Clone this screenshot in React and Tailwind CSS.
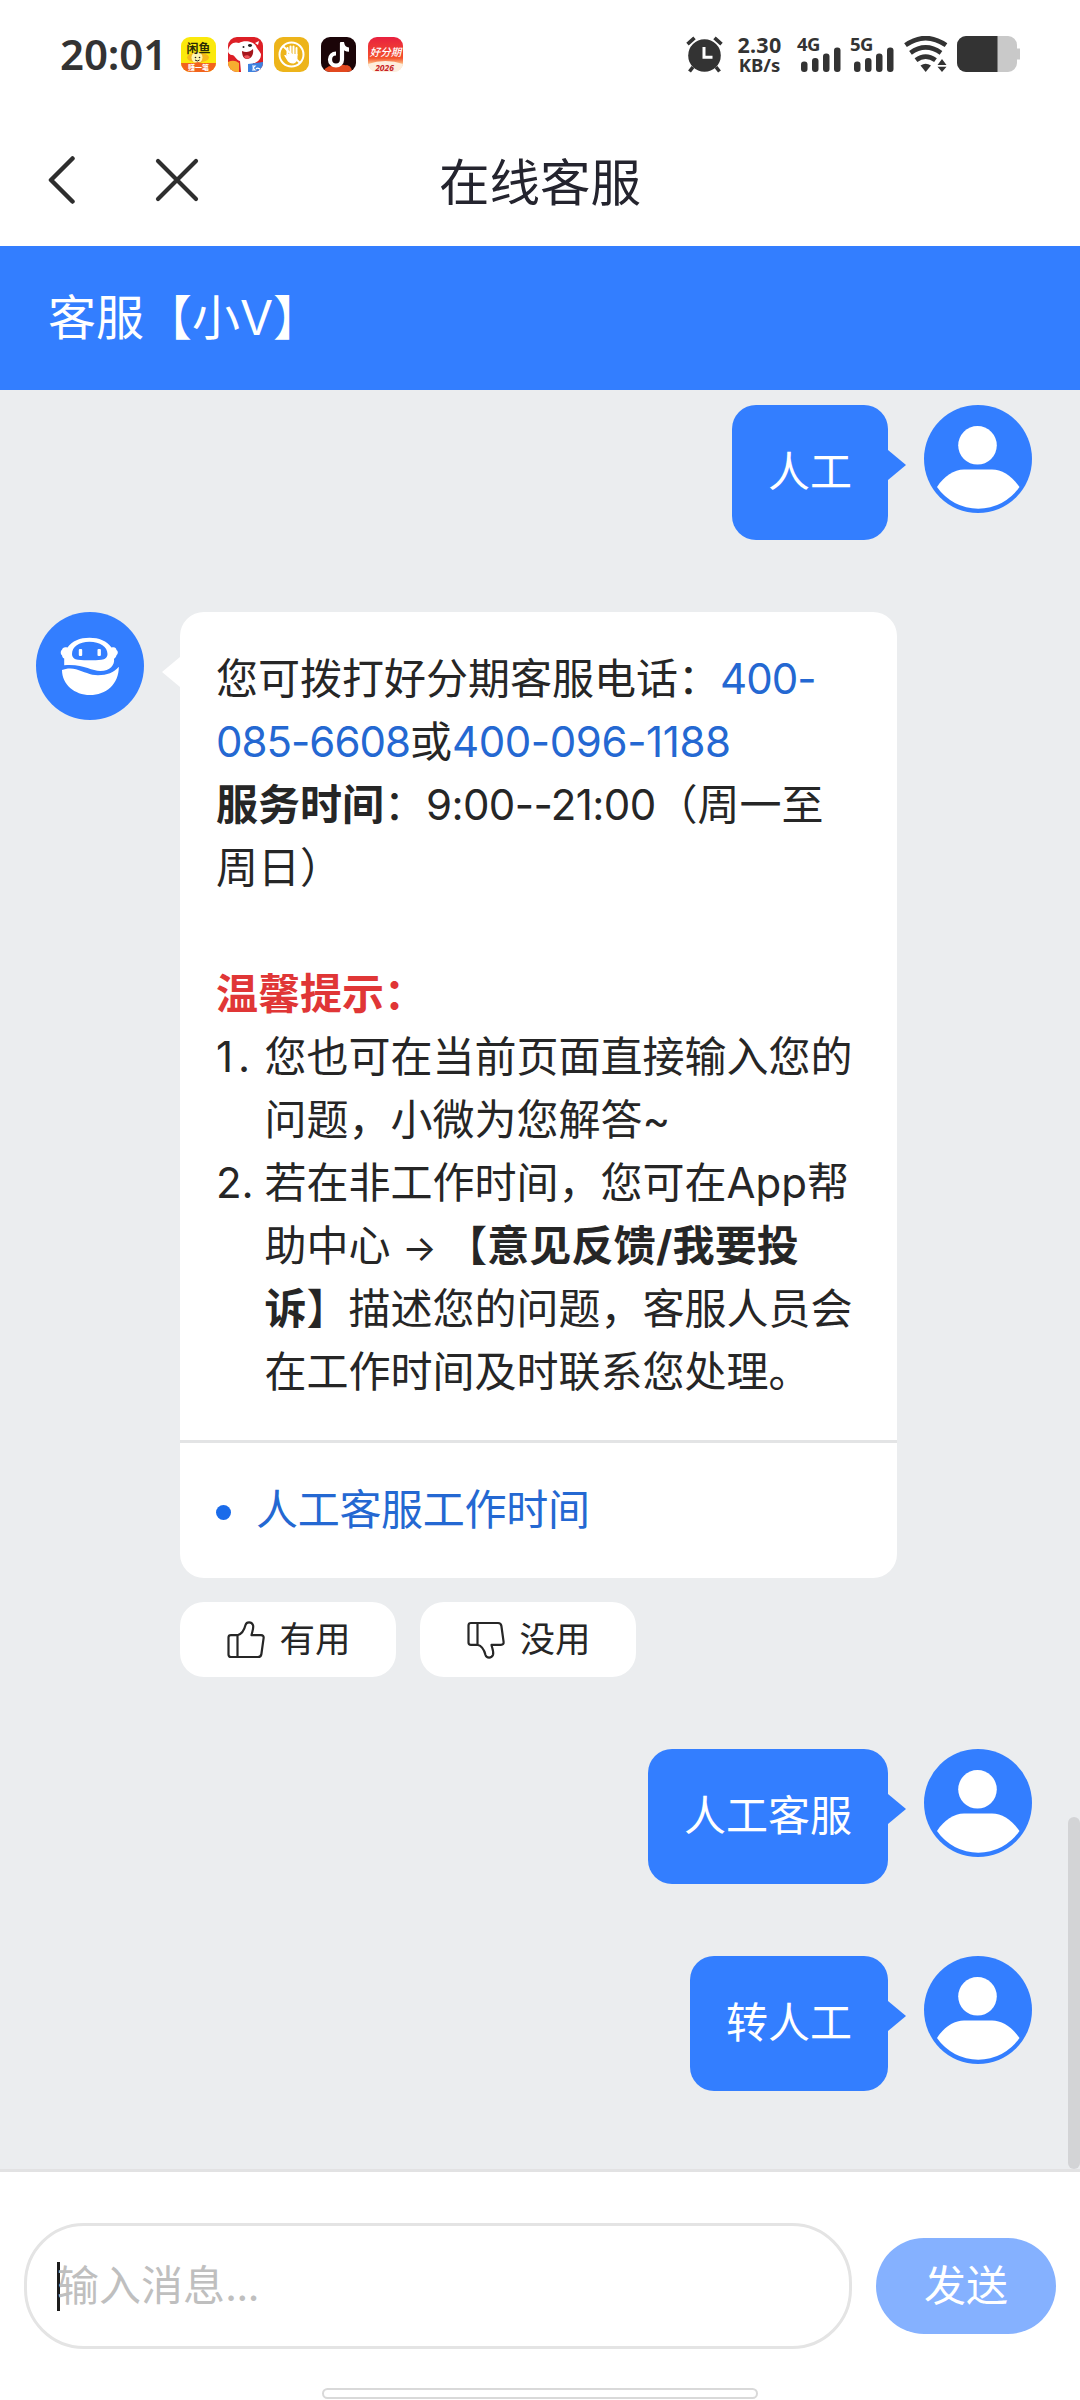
const CJK = "font-['Inter','Noto_Sans_CJK_SC',sans-serif]";

function XianyuIcon() {
    return (
        <svg viewBox="0 0 35 35" className="size-[35px] rounded-[9px]">
            <rect width="35" height="35" fill="#fbe90c" />
            <ellipse cx="17" cy="20.5" rx="11" ry="5" fill="#f5b81c" />
            <circle cx="16" cy="20.5" r="5.5" fill="#fff6b0" />
            <circle cx="14.5" cy="20.5" r="0.8" fill="#222" />
            <circle cx="18.5" cy="20.5" r="0.8" fill="#222" />
            <path d="M14 23q2.5 2 4.5 0" stroke="#222" strokeWidth="1" fill="none" />
            <path d="M0 26h13l4-1 4 1h14v9H0z" fill="#f2641c" />
            <text x="17.5" y="15.5" fontSize="12" fontWeight="700" textAnchor="middle" fill="#2b2b05">闲鱼</text>
            <text x="17.5" y="33.3" fontSize="7" fontWeight="700" textAnchor="middle" fill="#fff">赚一笔</text>
        </svg>
    );
}

function DogIcon() {
    return (
        <svg viewBox="0 0 35 35" className="size-[35px] rounded-[9px]">
            <rect width="35" height="35" fill="#dd1f26" />
            <path d="M0 14C1 7 6 4 11 6c5-3 14-2 17 3 1 3 3 4 5 8 0 6-4 9-8 9l-2 9H13l-1-11c-4-1-5-6-8-6-2 0-4-2-4-4z" fill="#fff" />
            <path d="M14 14c4 2 8 1 11-2 1 6-2 10-6 10-3 0-5-3-5-8z" fill="#a5161c" />
            <path d="M16 19c2-1 5-1 6 1-1 2-5 3-6-1z" fill="#f0575c" />
            <ellipse cx="22" cy="8.5" rx="2" ry="1.4" fill="#222" />
            <circle cx="15.5" cy="10" r="1" fill="#222" />
            <path d="M27 6l4-2-1 4z" fill="#fff" />
            <path d="M0 25q6-3 11 1v9H0z" fill="#f7ad2f" />
            <path d="M20 27l15-2v10H20z" fill="#3d82e0" />
            <path d="M24 29h3l-2 2 2 2h-3M28 32q2-2 5 1" stroke="#fff" strokeWidth="1.2" fill="none" />
        </svg>
    );
}

function HandIcon() {
    return (
        <svg viewBox="0 0 35 35" className="size-[35px] rounded-[9px]">
            <rect width="35" height="35" fill="#edb41a" />
            <circle cx="17.5" cy="17.5" r="12" fill="none" stroke="#fff" strokeWidth="2" />
            <path d="M9 9l17 17" stroke="#fff" strokeWidth="1.8" />
            <path d="M13.5 18v-7M16.5 17V9.5M19.5 17V9.5M22.5 18v-7" stroke="#fff" strokeWidth="2" strokeLinecap="round" />
            <path d="M12.6 17h10.9v4c0 3-2 5.5-4.5 5.5-3 0-5-1.5-6-3.5l-2.8-4.5c.8-1 2-.4 2.4.5z" fill="#fff" />
        </svg>
    );
}

function TiktokIcon() {
    return (
        <svg viewBox="0 0 35 35" className="size-[35px] rounded-[9px]">
            <rect width="35" height="35" fill="#1b0508" />
            <path d="M3 35c0-4 3-4 5-6 3 1 5-2 9-1 3-2 6 1 9 0 3 1 5 3 5 7z" fill="#e2481f" />
            <path d="M21 6v16.5a6 6 0 1 1-6-6" stroke="#fff" strokeWidth="4.2" fill="none" />
            <path d="M19 5h4c.3 3.5 2 5 5 5.5v4.3c-3.5-.2-5.5-1.5-7-3z" fill="#fff" />
        </svg>
    );
}

function HaofenqiIcon() {
    return (
        <svg viewBox="0 0 35 35" className="size-[35px] rounded-[9px]">
            <defs>
                <linearGradient id="hfq" x1="0" y1="0" x2="0" y2="1">
                    <stop offset="0" stopColor="#e8203f" />
                    <stop offset="0.6" stopColor="#f4502c" />
                    <stop offset="0.75" stopColor="#fbb27a" />
                    <stop offset="1" stopColor="#fff3e6" />
                </linearGradient>
            </defs>
            <rect width="35" height="35" fill="url(#hfq)" />
            <path d="M0 27q17.5-6 35 0v8H0z" fill="#fdeedd" />
            <text x="17.5" y="18.5" fontSize="10.5" fontStyle="italic" fontWeight="500" textAnchor="middle" fill="#fff">好分期</text>
            <text x="16.5" y="33.5" fontSize="8.5" fontStyle="italic" fontWeight="700" textAnchor="middle" fill="#c81e26">2026</text>
        </svg>
    );
}

function AlarmIcon() {
    return (
        <svg viewBox="0 0 37 37" className="w-[37px] h-[37px]" fill="none" stroke="#333" strokeLinecap="butt">
            <circle cx="18.5" cy="19.5" r="16.3" fill="#333" stroke="none" />
            <path d="M1.5 8.2L8.5 1.8M28.5 1.8l7 6.4" strokeWidth="3.6" />
            <path d="M7 31l-3.5 4.5M30 31l3.5 4.5" strokeWidth="3.6" />
            <path d="M18 11v10.2h8.5" stroke="#fff" strokeWidth="3" />
        </svg>
    );
}

function Signal({ label }) {
    return (
        <div className="relative w-[43px] h-9">
            <span className="absolute -left-0.5 top-0 text-[18.5px] leading-[15px] font-bold tracking-[-0.5px]">{label}</span>
            <svg viewBox="0 0 43 36" className="w-[43px] h-9" fill="#333">
                <rect x="2" y="25.5" width="6.5" height="10.5" rx="3" />
                <rect x="13" y="22" width="6.5" height="14" rx="3" />
                <rect x="24" y="17.5" width="6.5" height="18.5" rx="3" />
                <rect x="35" y="11.5" width="6.5" height="24.5" rx="3" />
            </svg>
        </div>
    );
}

function WifiIcon() {
    return (
        <svg viewBox="0 0 44 36" className="w-11 h-9" fill="none" stroke="#333" strokeWidth="4.6">
            <path d="M1.5 9.2Q21.5-5 42 9.2" />
            <path d="M6.5 16.8Q21.5 6 37 16.8" />
            <path d="M12 24.2Q21.5 17 31.5 24.2" />
            <path d="M16.5 29.5q5-3.5 10.5 0L21.7 36z" fill="#333" stroke="none" />
            <path d="M33.5 29l4.5-6 4.5 6zM33.5 30.8l4.5 5.2 4.5-5.2z" fill="#333" stroke="none" />
        </svg>
    );
}

function BatteryIcon() {
    return (
        <svg viewBox="0 0 63 36" className="w-[63px] h-9">
            <path d="M9 0h42a9 9 0 0 1 9 9v3.5h3v11h-3V27a9 9 0 0 1-9 9H9a9 9 0 0 1-9-9V9a9 9 0 0 1 9-9z" fill="#c9c9c9" />
            <path d="M9 0h31.5v36H9a9 9 0 0 1-9-9V9a9 9 0 0 1 9-9z" fill="#333" />
        </svg>
    );
}

function StatusBar() {
    return (
        <div className="flex h-[108px] items-center pl-[60px] pr-[60px] text-[#333] font-['Noto_Sans','Noto_Sans_CJK_SC',sans-serif]">
            <span className="w-[121px] text-[42px] leading-none font-semibold tracking-[-0.1px]">20:01</span>
            <div className="flex gap-[11.7px]">
                <XianyuIcon />
                <DogIcon />
                <HandIcon />
                <TiktokIcon />
                <HaofenqiIcon />
            </div>
            <div className="ml-auto flex items-center">
                <AlarmIcon />
                <div className="ml-[12px] flex w-[49px] flex-col items-center font-bold">
                    <span className="text-[21.5px] leading-[21px] tracking-[0.3px]">2.30</span>
                    <span className="text-[18.5px] leading-[20px]">KB/s</span>
                </div>
                <div className="ml-[15px] flex gap-2.5">
                    <Signal label="4G" />
                    <Signal label="5G" />
                </div>
                <div className="ml-[9px]"><WifiIcon /></div>
                <div className="ml-[9px]"><BatteryIcon /></div>
            </div>
        </div>
    );
}

function NavBar() {
    return (
        <div className="relative flex h-[138px] items-center pl-12">
            <svg viewBox="0 0 28 50" className="mt-[6px] h-[50px] w-7" fill="none" stroke="#2e2e2e" strokeWidth="4.5" strokeLinecap="round" strokeLinejoin="round">
                <path d="M24.5 3.5L3 25l21.5 21.5" />
            </svg>
            <svg viewBox="0 0 44 44" className="mt-[6px] ml-[79px] size-11" fill="none" stroke="#2e2e2e" strokeWidth="4.2" strokeLinecap="round">
                <path d="M3 3l38 38M41 3L3 41" />
            </svg>
            <h1 className="absolute inset-x-0 top-[39px] text-center text-[50.5px] leading-[72px] font-normal text-[#24242e]">在线客服</h1>
        </div>
    );
}

function UserAvatar() {
    return (
        <svg viewBox="0 0 108 108" className="size-[108px] shrink-0">
            <circle cx="54" cy="54" r="54" fill="#337eff" />
            <circle cx="53.5" cy="40.3" r="19.3" fill="#fff" />
            <path d="M13 82C20 71 30 64.5 40 64.5h28C78 64.5 88 71 95.5 82A50 50 0 0 1 13 82z" fill="#fff" />
        </svg>
    );
}

function RobotAvatar() {
    return (
        <svg viewBox="0 0 108 108" className="size-[108px] shrink-0">
            <circle cx="54" cy="54" r="54" fill="#337eff" />
            <path d="M31.5 35.5C36 29 44 25.8 53.5 25.8S71 29 75.5 35.5c3-.8 4.5-.2 5 2.5 1.8 1 1.8 4 0 5.2-.5 2-1.5 3-2.5 3.5 1 6-4 12.3-13.5 12.3-9.5 0-17-7.5-36.3-5.8v-6.7c-1.5-.5-2-1.8-2.2-3.3-1.8-1.2-1.5-4.5 0-5.5.5-2.3 2.5-3 5.5-2.2z" fill="#fff" />
            <path d="M36 42c0-7 7-12.2 17.5-12.2S71.5 35 71.5 42c0 3.5-2.5 5.5-6 5.8q-11.5 1-23.5 0c-3.5-.3-6-2.3-6-5.8z" fill="#337eff" />
            <rect x="42.8" y="37" width="3.4" height="7" rx="1" fill="#fff" />
            <rect x="61.5" y="37" width="3.4" height="7" rx="1" fill="#fff" />
            <path d="M26 58c3.5-1.5 9-2.2 14-.8 8 2.3 14 6 22 6 9 0 16-2.8 20.8-8.500C83 72 70 83 54 83 38.5 83 26 72.5 26 58z" fill="#fff" />
        </svg>
    );
}

function ThumbIcon({ down }) {
    return (
        <svg viewBox="0 0 38 38" className={down ? "size-[38px] -scale-y-100" : "size-[38px]"} fill="none" stroke="#262626" strokeWidth="2.2" strokeLinejoin="round">
            <path d="M10.5 14.2C15.5 13 17.5 8 18.5 4c1-3.4 6-3.6 7.5.2 1 3-1 6.8-1.500 10H34q3 0 2.6 3L34.4 33q-.4 3-3.4 3H4q-2.5 0-2.5-2.5v-17q0-2.3 2.5-2.3zM10.5 14.2V36" />
        </svg>
    );
}

function UserMessage({ text }) {
    return (
        <div className="flex justify-end pr-12">
            <div className="relative mr-9 h-[135px] rounded-[24px] bg-[#337eff] px-9 pt-[35px] text-[42px] leading-[63px] text-white">
                {text}
                <svg viewBox="0 0 18 30" className="absolute left-full top-[45px] h-[30px] w-[18px]">
                    <path d="M0 0l18 15L0 30z" fill="#337eff" />
                </svg>
            </div>
            <UserAvatar />
        </div>
    );
}

function FeedbackButton({ label, down }) {
    return (
        <button type="button" className="flex h-[75px] w-[216px] items-center justify-center gap-[14px] rounded-[24px] bg-white pl-0.5 text-[35.5px] leading-none text-[#262626]">
            <ThumbIcon down={down} />
            {label}
        </button>
    );
}

function BotMessage() {
    return (
        <div className="flex pl-9">
            <RobotAvatar />
            <div className="ml-9">
                <div className="relative w-[717px] rounded-[24px] bg-white text-[42px] leading-[63px] whitespace-nowrap text-[#262626]">
                    <svg viewBox="0 0 18 30" className="absolute right-full top-[45px] h-[30px] w-[18px]">
                        <path d="M18 0L0 15l18 15z" fill="#fff" />
                    </svg>
                    <div className="border-b-[3px] border-[#e3e4e5] px-9 pt-[35px] pb-[37px]">
                        <p>
                            您可拨打好分期客服电话：<a className="tracking-[-1px] text-[#2468d2]">400-</a><br />
                            <a className="tracking-[-1px] text-[#2468d2]">085-6608</a>或<a className="tracking-[-0.4px] text-[#2468d2]">400-096-1188</a><br />
                            <b>服务时间</b>：<span className="tracking-[-0.6px]">9:00--21:00</span>（周一至<br />
                            周日）
                        </p>
                        <p className="mt-[63px] font-bold text-[#e03636]">温馨提示：</p>
                        <ol>
                            <li className="flex">
                                <span className="w-[48.5px] shrink-0 tracking-[5px]">1.</span>
                                <p>您也可在当前页面直接输入您的<br />问题，小微为您解答~</p>
                            </li>
                            <li className="flex">
                                <span className="w-[48.5px] shrink-0">2.</span>
                                <p>
                                    若在非工作时间，您可在App帮<br />
                                    助中心 <span className="inline-block w-[33px] text-[36px] leading-none">→</span><span className="-ml-0.5"> 【</span><b className="tracking-[0.2px]">意见反馈/我要投</b><br />
                                    <b>诉</b>】描述您的问题，客服人员会<br />
                                    在工作时间及时联系您处理。
                                </p>
                            </li>
                        </ol>
                    </div>
                    <div className="flex items-center px-9 pt-[35px] pb-[37px] text-[#2468d2]">
                        <span className="mt-1.5 mr-[25px] size-[15px] rounded-full bg-[#1a6bea]" />
                        <a className="tracking-[-0.3px]">人工客服工作时间</a>
                    </div>
                </div>
                <div className="mt-6 flex gap-6">
                    <FeedbackButton label="有用" />
                    <FeedbackButton label="没用" down />
                </div>
            </div>
        </div>
    );
}

export default function App() {
    return (
        <div className={`flex h-[2400px] w-[1080px] flex-col overflow-hidden bg-white ${CJK}`} lang="zh-CN">
            <StatusBar />
            <NavBar />
            <header className="flex h-[144px] items-center bg-[#337eff] pl-12 text-[48px] leading-none text-white">
                客服【小V】
            </header>

            <main className="relative flex h-[1782px] flex-col gap-[72px] border-b-[3px] border-[#e2e2e3] bg-[#ebedef] pt-[15px]">
                <UserMessage text="人工" />
                <BotMessage />
                <UserMessage text="人工客服" />
                <UserMessage text="转人工" />
                {/* Scrollbar */}
                <div className="absolute right-0 bottom-0 h-[352px] w-3 rounded-full bg-[#d3d4d6]" />
            </main>

            <footer className="flex flex-1 flex-col">
                <div className="mt-[51px] flex items-center gap-6 px-6">
                    <div className="flex h-[126px] w-[828px] items-center rounded-[60px] border-[3px] border-[#e4e4e4] pl-[30px] text-[42px] text-[#bfbfbf]">
                        <span className="h-[49px] w-[3px] bg-[#1c1c1c]" />
                        <span className="-ml-[3px] pb-0.5 leading-[63px]">输入消息<span className="tracking-[-0.8px]">...</span></span>
                    </div>
                    <button type="button" className="h-24 w-[180px] rounded-full bg-[#85b1ff] pb-0.5 text-[42px] leading-[63px] text-white">发送</button>
                </div>
                <div className="mt-[39px] h-[11px] w-[436px] self-center rounded-full border-2 border-[#d9d9d9]" />
            </footer>
        </div>
    );
}
